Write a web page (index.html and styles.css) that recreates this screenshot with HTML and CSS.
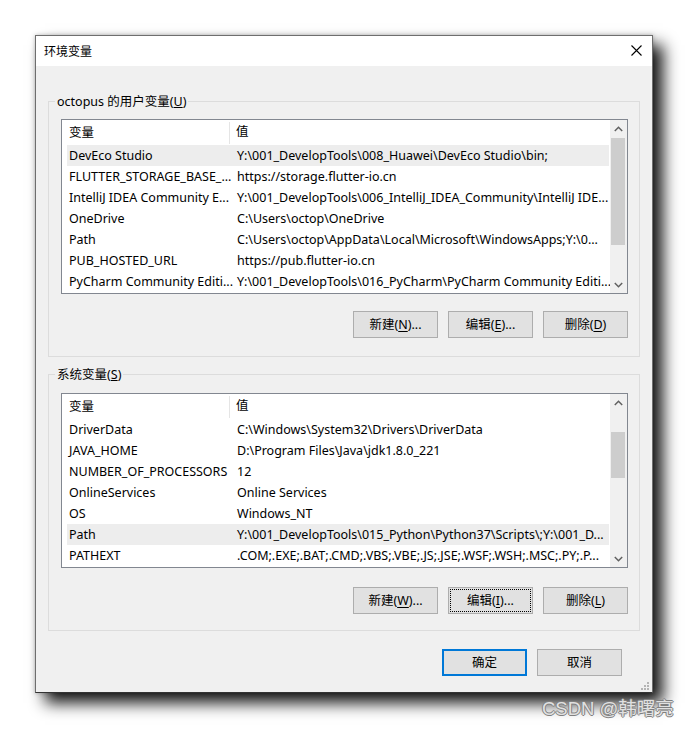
FILE: index.html
```html
<!DOCTYPE html>
<html lang="zh-CN">
<head>
<meta charset="utf-8">
<title>环境变量</title>
<link rel="stylesheet" href="styles.css">
</head>
<body>
<div class="page">
  <div class="window">
    <div class="titlebar">
      <span class="title">环境变量</span>
      <svg class="close" width="11" height="11" viewBox="0 0 11 11"><path d="M0.5 0.5L10.5 10.5M10.5 0.5L0.5 10.5" stroke="#000" stroke-width="1.1" fill="none"/></svg>
    </div>
    <div class="content">
      <fieldset class="group group-user">
        <legend>octopus 的用户变量(<u>U</u>)</legend>
        <div class="list">
          <div class="list-main">
            <div class="row head"><span class="c1">变量</span><span class="c2">值</span></div>
            <div class="row sel"><span class="c1">DevEco Studio</span><span class="c2">Y:\001_DevelopTools\008_Huawei\DevEco Studio\bin;</span></div>
            <div class="row"><span class="c1">FLUTTER_STORAGE_BASE_...</span><span class="c2">https://storage.flutter-io.cn</span></div>
            <div class="row"><span class="c1">IntelliJ IDEA Community E...</span><span class="c2">Y:\001_DevelopTools\006_IntelliJ_IDEA_Community\IntelliJ IDE...</span></div>
            <div class="row"><span class="c1">OneDrive</span><span class="c2">C:\Users\octop\OneDrive</span></div>
            <div class="row"><span class="c1">Path</span><span class="c2">C:\Users\octop\AppData\Local\Microsoft\WindowsApps;Y:\0...</span></div>
            <div class="row"><span class="c1">PUB_HOSTED_URL</span><span class="c2">https://pub.flutter-io.cn</span></div>
            <div class="row"><span class="c1">PyCharm Community Editi...</span><span class="c2">Y:\001_DevelopTools\016_PyCharm\PyCharm Community Editi...</span></div>
          </div>
          <div class="scrollbar">
            <div class="arrow"><svg width="9" height="6" viewBox="0 0 9 6"><path d="M0.8 5L4.5 1.3L8.2 5" stroke="#606060" stroke-width="1.5" fill="none"/></svg></div>
            <div class="track"><div class="thumb" style="margin-top:1px;height:107px"></div></div>
            <div class="arrow"><svg width="9" height="6" viewBox="0 0 9 6"><path d="M0.8 1L4.5 4.7L8.2 1" stroke="#606060" stroke-width="1.5" fill="none"/></svg></div>
          </div>
        </div>
        <div class="btns">
          <button class="btn">新建(<u>N</u>)...</button>
          <button class="btn">编辑(<u>E</u>)...</button>
          <button class="btn">删除(<u>D</u>)</button>
        </div>
      </fieldset>

      <fieldset class="group group-system">
        <legend>系统变量(<u>S</u>)</legend>
        <div class="list">
          <div class="list-main">
            <div class="row head"><span class="c1">变量</span><span class="c2">值</span></div>
            <div class="row"><span class="c1">DriverData</span><span class="c2">C:\Windows\System32\Drivers\DriverData</span></div>
            <div class="row"><span class="c1">JAVA_HOME</span><span class="c2">D:\Program Files\Java\jdk1.8.0_221</span></div>
            <div class="row"><span class="c1">NUMBER_OF_PROCESSORS</span><span class="c2">12</span></div>
            <div class="row"><span class="c1">OnlineServices</span><span class="c2">Online Services</span></div>
            <div class="row"><span class="c1">OS</span><span class="c2">Windows_NT</span></div>
            <div class="row sel"><span class="c1">Path</span><span class="c2">Y:\001_DevelopTools\015_Python\Python37\Scripts\;Y:\001_D...</span></div>
            <div class="row"><span class="c1">PATHEXT</span><span class="c2">.COM;.EXE;.BAT;.CMD;.VBS;.VBE;.JS;.JSE;.WSF;.WSH;.MSC;.PY;.P...</span></div>
          </div>
          <div class="scrollbar">
            <div class="arrow"><svg width="9" height="6" viewBox="0 0 9 6"><path d="M0.8 5L4.5 1.3L8.2 5" stroke="#606060" stroke-width="1.5" fill="none"/></svg></div>
            <div class="track"><div class="thumb" style="margin-top:21px;height:46px"></div></div>
            <div class="arrow"><svg width="9" height="6" viewBox="0 0 9 6"><path d="M0.8 1L4.5 4.7L8.2 1" stroke="#606060" stroke-width="1.5" fill="none"/></svg></div>
          </div>
        </div>
        <div class="btns">
          <button class="btn">新建(<u>W</u>)...</button>
          <button class="btn focus">编辑(<u>I</u>)...</button>
          <button class="btn">删除(<u>L</u>)</button>
        </div>
      </fieldset>

      <div class="dialog-btns">
        <button class="btn default">确定</button>
        <button class="btn">取消</button>
      </div>
    </div>
    <svg class="grip" width="8" height="8" viewBox="0 0 8 8">
      <rect x="6" y="0" width="2" height="2" fill="#b4b4b4"/>
      <rect x="3" y="3" width="2" height="2" fill="#b4b4b4"/>
      <rect x="6" y="3" width="2" height="2" fill="#b4b4b4"/>
      <rect x="0" y="6" width="2" height="2" fill="#b4b4b4"/>
      <rect x="3" y="6" width="2" height="2" fill="#b4b4b4"/>
      <rect x="6" y="6" width="2" height="2" fill="#b4b4b4"/>
    </svg>
  </div>
  <div class="watermark">CSDN @韩曙亮</div>
</div>
</body>
</html>
```

FILE: styles.css
```css
* { box-sizing: border-box; }

html, body {
  margin: 0;
  padding: 0;
  background: #ffffff;
}

body {
  font-family: "Noto Sans", "Noto Sans CJK SC", sans-serif;
  font-size: 12.5px;
  color: #000;
}

.page {
  position: relative;
  width: 688px;
  height: 729px;
  padding: 35px 0 0 35px;
}

.window {
  position: relative;
  width: 618px;
  border: 1px solid #6e6e6e;
  border-bottom-color: #333;
  background: #f0f0f0;
  box-shadow: 10px 10px 15px rgba(0, 0, 0, 0.92), 0 0 4px rgba(0, 0, 0, 0.25);
}

.titlebar {
  height: 30px;
  background: #ffffff;
  display: flex;
  align-items: center;
  justify-content: space-between;
  padding: 0 10px 0 8px;
}

.title {
  font-family: "Noto Sans CJK SC", sans-serif;
  font-size: 12px;
  line-height: 16px;
  margin-top: -1px;
}

.close { display: block; margin-top: -2px; }

.content {
  padding: 27px 0 16px 0;
}

.group {
  margin: 0 12px;
  padding: 9px 11px 18px 12px;
  border: 1px solid #dcdcdc;
  min-width: 0;
}

.group-system {
  margin-top: 9px;
  padding-top: 10px;
  padding-bottom: 16px;
}

.group legend {
  margin-left: -6px;
  padding: 0 2px;
  font-size: 12.5px;
  line-height: 17px;
}

.list {
  display: flex;
  height: 175px;
  border: 1px solid #828790;
  background: #ffffff;
}

.list-main {
  flex: 1;
  min-width: 0;
  padding: 0 1px 0 5px;
}

.row {
  display: flex;
  height: 21px;
  line-height: 21px;
  white-space: nowrap;
}

.row.head {
  height: 25px;
  line-height: 24px;
}

.row.sel { background: #ededed; }

.c1 {
  width: 164px;
  flex: none;
  padding-left: 2px;
}

.c2 {
  flex: 1;
  min-width: 0;
  padding-left: 6px;
}

.row.head .c1 {
  width: 163px;
  border-right: 1px solid #e5e5e5;
  margin: 2px 0 1px 0;
  line-height: 22px;
}

.row.head .c2 { line-height: 24px; }

.scrollbar {
  width: 17px;
  flex: none;
  display: flex;
  flex-direction: column;
  background: #f0f0f0;
}

.arrow {
  height: 17px;
  display: flex;
  align-items: center;
  justify-content: center;
}

.arrow svg { display: block; }

.track {
  flex: 1;
  padding: 0 2px 0 1px;
}

.thumb {
  background: #cdcdcd;
}

.btns {
  display: flex;
  justify-content: flex-end;
  gap: 10px;
  margin-top: 17px;
}

.group-system .btns { margin-top: 19px; }

.btn {
  width: 85px;
  height: 27px;
  padding: 0;
  background: #e1e1e1;
  border: 1px solid #adadad;
  font-family: "Noto Sans", "Noto Sans CJK SC", sans-serif;
  font-size: 12.5px;
  color: #000;
  line-height: 24px;
}

.btn u { text-underline-offset: 2px; }

.btn.focus {
  outline: 1px dotted #000;
  outline-offset: -3px;
}

.btn.default {
  border: 2px solid #0078d7;
}

.dialog-btns {
  display: flex;
  justify-content: flex-end;
  gap: 10px;
  margin-top: 18px;
  padding-right: 30px;
}

.grip {
  position: absolute;
  right: 3px;
  bottom: 2px;
  display: block;
}

.watermark {
  position: absolute;
  left: 542px;
  top: 697px;
  font-family: "Liberation Sans", "Noto Sans CJK SC", sans-serif;
  font-size: 18.5px;
  line-height: 24px;
  color: #e0e0e0;
  text-shadow: 1px 0 0 #808080, -1px 0 0 #808080, 0 1px 0 #808080, 0 -1px 0 #808080;
}
```
